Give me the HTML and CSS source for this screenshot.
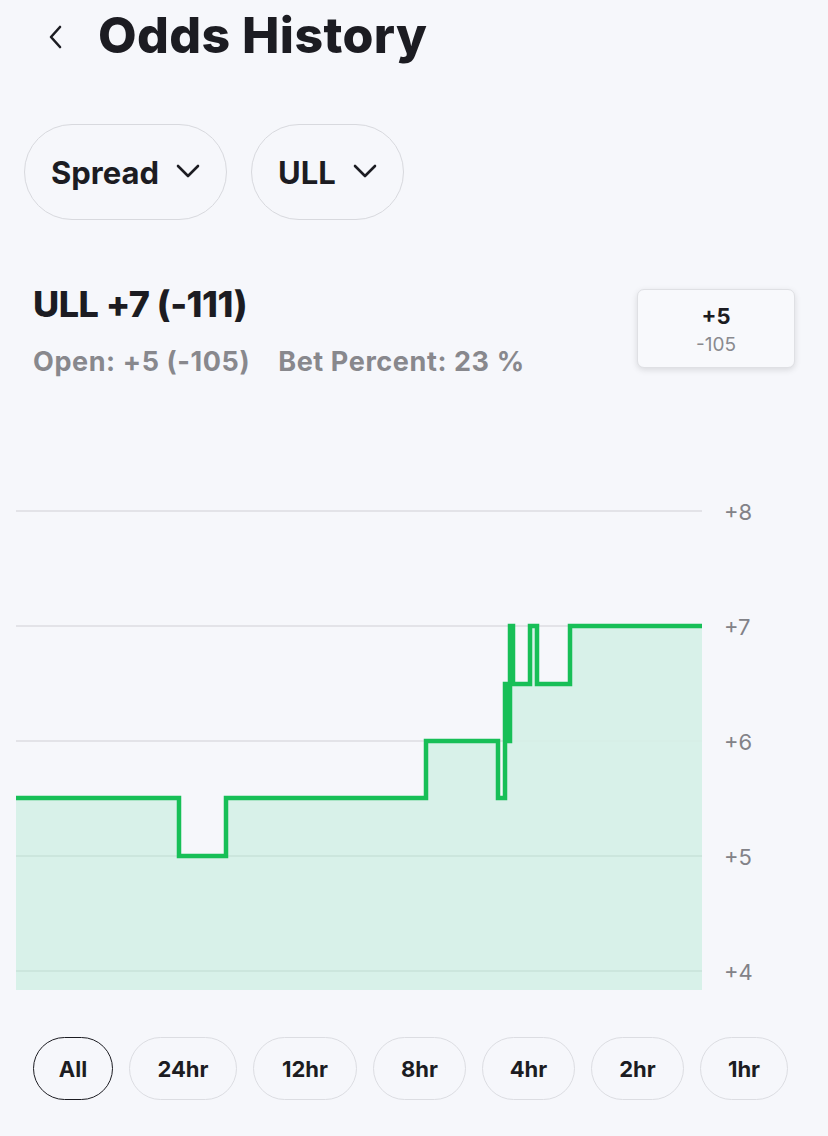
FILE: index.html
```html
<!DOCTYPE html>
<html>
<head>
<meta charset="utf-8">
<link rel="stylesheet" href="styles.css">
</head>
<body>
<div class="page">
  <header class="header">
    <svg class="back" width="16" height="24" viewBox="0 0 16 24"><path d="M13 2 L4 12 L13 22" fill="none" stroke="#1c1c22" stroke-width="2.6" stroke-linecap="round" stroke-linejoin="round"/></svg>
    <h1 class="title">Odds History</h1>
  </header>

  <div class="filters">
    <div class="pill">Spread <svg class="chev" width="24" height="15" viewBox="0 0 24 15"><path d="M2 2 L12 12 L22 2" fill="none" stroke="#1c1c22" stroke-width="2.6" stroke-linecap="round" stroke-linejoin="round"/></svg></div>
    <div class="pill">ULL <svg class="chev" width="24" height="15" viewBox="0 0 24 15"><path d="M2 2 L12 12 L22 2" fill="none" stroke="#1c1c22" stroke-width="2.6" stroke-linecap="round" stroke-linejoin="round"/></svg></div>
  </div>

  <section class="info">
    <div class="line-title">ULL +7 (-111)</div>
    <div class="line-sub"><span>Open: +5 (-105)</span><span>Bet Percent: 23 %</span></div>
    <div class="tooltip">
      <div class="tip-main">+5</div>
      <div class="tip-sub">-105</div>
    </div>
  </section>

  <div class="chart">
    <svg width="828" height="520" viewBox="0 480 828 520">
      <g stroke="#dcdde2" stroke-width="1.5">
        <line x1="16" y1="511" x2="702" y2="511"/>
        <line x1="16" y1="626" x2="702" y2="626"/>
        <line x1="16" y1="741" x2="702" y2="741"/>
        <line x1="16" y1="856" x2="702" y2="856"/>
        <line x1="16" y1="971" x2="702" y2="971"/>
      </g>
      <path d="M16,798 H179 V856 H226 V798 H426 V741 H498 V798 H505 V684 H507 V741 H510 V626 H513 V684 H530 V626 H537 V684 H570 V626 H702 V990 H16 Z" fill="#d5f0e7" fill-opacity="0.9"/>
      <g stroke="#c9e3da" stroke-width="1.5">
        <line x1="16" y1="856" x2="702" y2="856"/>
        <line x1="16" y1="971" x2="702" y2="971"/>
      </g>
      <path d="M16,798 H179 V856 H226 V798 H426 V741 H498 V798 H505 V684 H507 V741 H510 V626 H513 V684 H530 V626 H537 V684 H570 V626 H702" fill="none" stroke="#17bf57" stroke-width="4.5"/>
      <g class="axis" fill="#828288">
        <text x="724" y="520">+8</text>
        <text x="724" y="635">+7</text>
        <text x="724" y="750">+6</text>
        <text x="724" y="865">+5</text>
        <text x="724" y="980">+4</text>
      </g>
    </svg>
  </div>

  <nav class="ranges">
    <div class="range active">All</div>
    <div class="range w24">24hr</div>
    <div class="range w12">12hr</div>
    <div class="range">8hr</div>
    <div class="range">4hr</div>
    <div class="range">2hr</div>
    <div class="range w1">1hr</div>
  </nav>
</div>
</body>
</html>
```

FILE: styles.css
```css
* { box-sizing: border-box; }
html, body {
  margin: 0;
  padding: 0;
  background: #f6f7fb;
}
body {
  font-family: Inter, "Noto Sans", "Liberation Sans", sans-serif;
  color: #1c1c22;
  width: 828px;
  height: 1136px;
  overflow: hidden;
}
.page {
  position: relative;
}
.header {
  display: flex;
  align-items: center;
  height: 72px;
  padding-left: 47px;
  padding-bottom: 2px;
}
.back {
  display: block;
  margin-right: 35px;
  margin-top: 3px;
}
.title {
  margin: 0;
  font-size: 50px;
  font-weight: 800;
  letter-spacing: 0.4px;
  line-height: 1;
}
.filters {
  display: flex;
  gap: 24px;
  padding-left: 24px;
  margin-top: 52px;
}
.pill {
  display: flex;
  align-items: center;
  gap: 17px;
  height: 96px;
  padding: 0 26px;
  border: 1px solid #d8d9de;
  border-radius: 48px;
  font-size: 31px;
  font-weight: 700;
}
.chev { display: block; margin-top: -2px; }
.info {
  position: relative;
  padding-left: 33px;
  margin-top: 62px;
}
.line-title {
  font-size: 36px;
  font-weight: 800;
  line-height: 44px;
  letter-spacing: -0.5px;
}
.line-sub {
  display: flex;
  gap: 28px;
  margin-top: 20px;
  font-size: 27px;
  font-weight: 700;
  color: #88888d;
  line-height: 32px;
  letter-spacing: 0.6px;
}
.tooltip {
  position: absolute;
  left: 637px;
  top: 7px;
  width: 158px;
  height: 79px;
  padding-top: 4px;
  background: #f8f9fc;
  border: 1px solid #dfe0e4;
  border-radius: 7px;
  box-shadow: 0 2px 6px rgba(0,0,0,0.12);
  display: flex;
  flex-direction: column;
  align-items: center;
  justify-content: center;
}
.tip-main {
  font-size: 22px;
  font-weight: 700;
  line-height: 28px;
}
.tip-sub {
  font-size: 19px;
  color: #8a8a8f;
  line-height: 30px;
}
.chart {
  margin-top: 102px;
  height: 520px;
}
.chart svg { display: block; }
.axis text {
  font-family: Inter, "Noto Sans", sans-serif;
  font-size: 22px;
}
.ranges {
  display: flex;
  gap: 16px;
  padding-left: 33px;
  margin-top: 37px;
}
.range {
  display: flex;
  align-items: center;
  justify-content: center;
  width: 93px;
  height: 63px;
  border: 1px solid #dcdde2;
  border-radius: 32px;
  font-size: 22px;
  font-weight: 700;
}
.range.active { width: 80px; border-color: #1c1c22; }
.range.w24 { width: 108px; }
.range.w12 { width: 104px; }
.range.w1 { width: 88px; }
```
